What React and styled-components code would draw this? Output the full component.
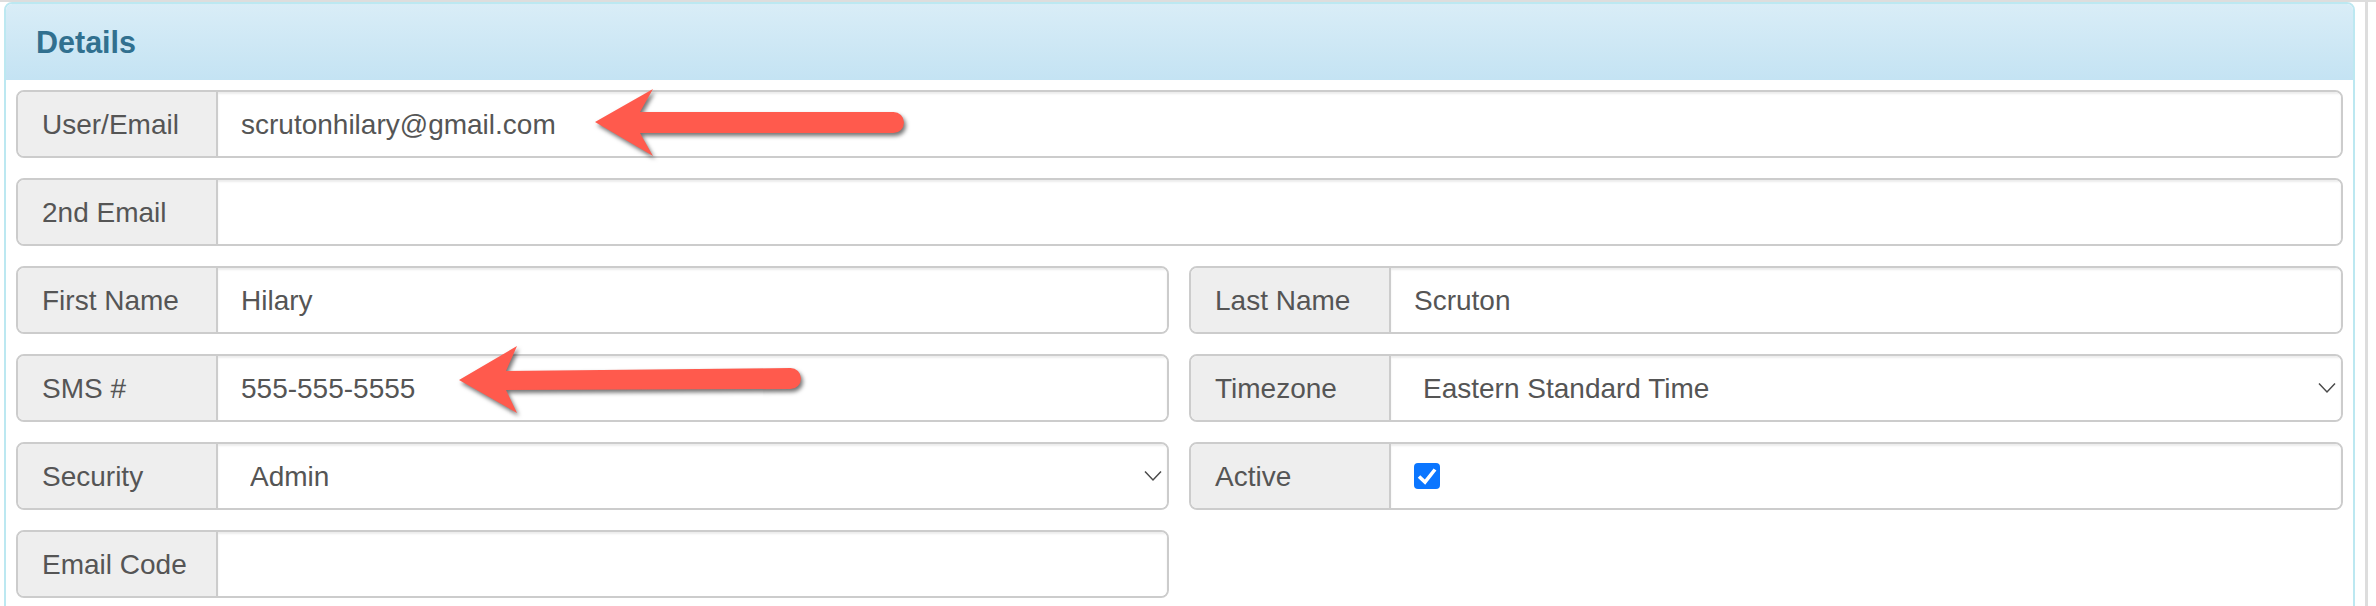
import React from 'react';
import styled, { createGlobalStyle } from 'styled-components';

const GlobalStyle = createGlobalStyle`
  html, body {
    margin: 0;
    height: 606px;
    overflow: hidden;
    background: #fff;
  }
  body {
    box-sizing: border-box;
    border-top: 2px solid #ddd;
    font-family: "Liberation Sans", Arial, sans-serif;
  }
`;

const Page = styled.div`
  position: relative;
  box-sizing: border-box;
  width: 2368px;
  height: 604px;
  padding-left: 4px;
  border-right: 3px solid #ddd;
`;

const Panel = styled.section`
  box-sizing: border-box;
  width: 2351px;
  height: 612px;
  border: 2px solid #bce8f1;
  border-radius: 8px;
  overflow: hidden;
`;

const PanelHeader = styled.header`
  display: flex;
  align-items: center;
  box-sizing: border-box;
  height: 76px;
  padding: 0 0 0 30px;
  background: linear-gradient(to bottom, #d9edf7, #c4e3f3);
`;

const Title = styled.h3`
  margin: 0;
  font-size: 30.5px;
  font-weight: 700;
  color: #31708f;
`;

const Form = styled.form`
  display: grid;
  grid-template-columns: 1153px 1154px;
  grid-auto-rows: 68px;
  column-gap: 20px;
  row-gap: 20px;
  padding: 10px;
`;

const Group = styled.div`
  display: flex;
  box-sizing: border-box;
  border: 2px solid #ccc;
  border-radius: 8px;
  overflow: hidden;
  grid-column: ${(p) => (p.$wide ? '1 / -1' : 'auto')};
`;

const Label = styled.label`
  display: flex;
  align-items: center;
  flex: 0 0 auto;
  box-sizing: border-box;
  width: 200px;
  padding: 1px 0 0 24px;
  background: #eee;
  border-right: 2px solid #ccc;
  font-size: 28px;
  color: #555;
`;

const Input = styled.input`
  flex: 1;
  min-width: 0;
  box-sizing: border-box;
  padding: 1px 23px 0;
  border: 0;
  outline: 0;
  background: #fff;
  box-shadow: inset 0 2px 2px rgba(0, 0, 0, 0.075);
  font: 28px "Liberation Sans", Arial, sans-serif;
  color: #555;
`;

const SelectWrap = styled.div`
  position: relative;
  flex: 1;
  display: flex;
  min-width: 0;
`;

const Select = styled.select`
  flex: 1;
  min-width: 0;
  padding: 1px 0 0 32px;
  border: 0;
  outline: 0;
  appearance: none;
  background: #fff;
  box-shadow: inset 0 2px 2px rgba(0, 0, 0, 0.075);
  font: 28px "Liberation Sans", Arial, sans-serif;
  color: #555;
`;

const Chevron = styled.svg`
  position: absolute;
  right: 5px;
  top: 26px;
  width: 18px;
  height: 12px;
  pointer-events: none;
`;

const CheckCell = styled.div`
  flex: 1;
  display: flex;
  align-items: center;
  padding-left: 23px;
  background: #fff;
  box-shadow: inset 0 2px 2px rgba(0, 0, 0, 0.075);
`;

const CheckBox = styled.span`
  display: flex;
  width: 26px;
  height: 26px;
  border-radius: 4px;
  background: #0b76ff;
`;

const Arrow = styled.svg`
  position: absolute;
  left: ${(p) => p.$left}px;
  top: ${(p) => p.$top}px;
  filter: drop-shadow(2px 3px 2px rgba(0, 0, 0, 0.55));
  overflow: visible;
`;

const ARROW_FILL = '#ff5a4d';

const TextField = ({ label, value, wide }) => (
  <Group $wide={wide}>
    <Label>{label}</Label>
    <Input type="text" defaultValue={value} />
  </Group>
);

const SelectField = ({ label, value }) => (
  <Group>
    <Label>{label}</Label>
    <SelectWrap>
      <Select defaultValue={value}>
        <option>{value}</option>
      </Select>
      <Chevron viewBox="0 0 18 12">
        <path d="M1 1.5l8 8.5 8-8.5" fill="none" stroke="#4a4a4a" strokeWidth="1.5" />
      </Chevron>
    </SelectWrap>
  </Group>
);

const App = () => (
  <>
    <GlobalStyle />
    <Page>
      <Panel>
        <PanelHeader>
          <Title>Details</Title>
        </PanelHeader>
        <Form>
          <TextField wide label="User/Email" value="scrutonhilary@gmail.com" />
          <TextField wide label="2nd Email" value="" />
          <TextField label="First Name" value="Hilary" />
          <TextField label="Last Name" value="Scruton" />
          <TextField label="SMS #" value="555-555-5555" />
          <SelectField label="Timezone" value="Eastern Standard Time" />
          <SelectField label="Security" value="Admin" />
          <Group>
            <Label>Active</Label>
            <CheckCell>
              <CheckBox>
                <svg width="26" height="26" viewBox="0 0 26 26">
                  <path d="M5 13.5L11 19L21 6.5" fill="none" stroke="#fff" strokeWidth="3.6" />
                </svg>
              </CheckBox>
            </CheckCell>
          </Group>
          <TextField label="Email Code" value="" />
        </Form>
      </Panel>
      {/* red annotation arrows laid over the form */}
      <Arrow $left={590} $top={82} width="330" height="80">
        <path d="M5 38L63 5L50 28H303.5A10.5 10.5 0 0 1 303.5 49H50L63 72Z" fill={ARROW_FILL} />
      </Arrow>
      <Arrow $left={454} $top={339} width="360" height="80">
        <path d="M5 39L63 5L52 30L336.5 27A10.5 10.5 0 0 1 336.5 48L52 49L63 72Z" fill={ARROW_FILL} />
      </Arrow>
    </Page>
  </>
);

export default App;
